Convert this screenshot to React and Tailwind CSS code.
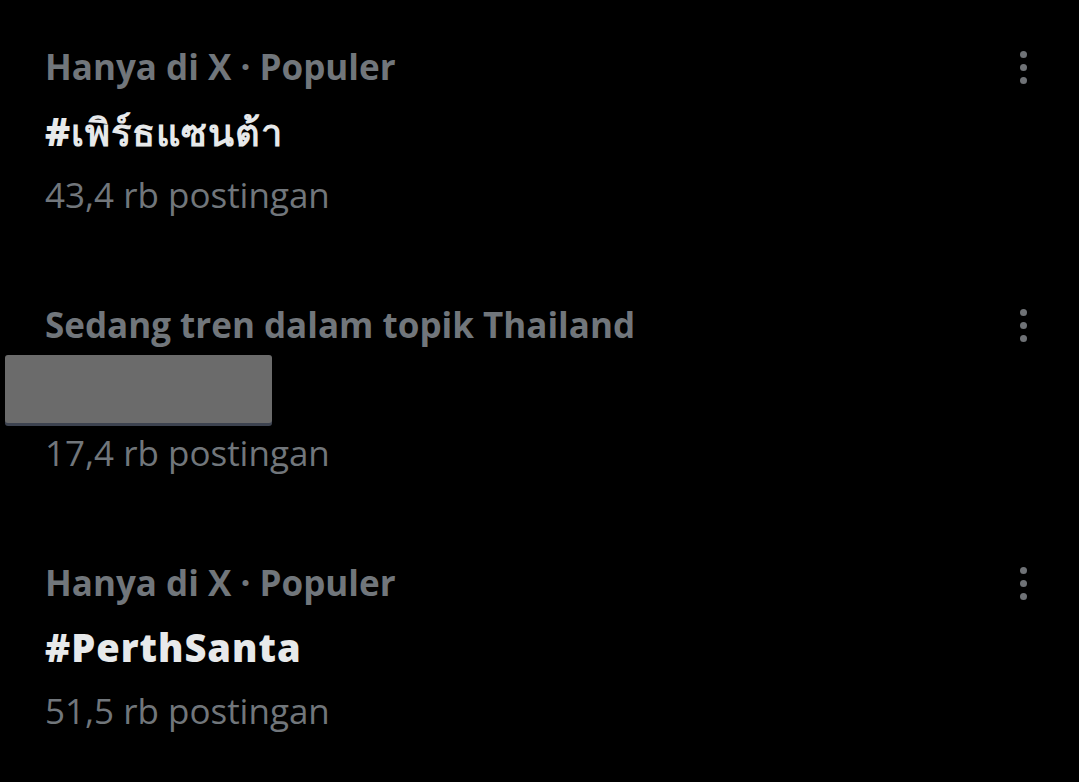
import React from "react";

const TRENDS = [
  { context: "Hanya di X · Populer", title: "#เพิร์ธแซนต้า", count: "43,4 rb postingan" },
  { context: "Sedang tren dalam topik Thailand", title: null, count: "17,4 rb postingan" },
  { context: "Hanya di X · Populer", title: "#PerthSanta", count: "51,5 rb postingan" },
];

function MoreDots() {
  return (
    <div className="flex h-[64px] w-[30px] flex-col items-center justify-center gap-[6px]">
      <span className="h-[7px] w-[7px] rounded-full bg-[#6f7276]" />
      <span className="h-[7px] w-[7px] rounded-full bg-[#6f7276]" />
      <span className="h-[7px] w-[7px] rounded-full bg-[#6f7276]" />
    </div>
  );
}

function TrendRow({ trend }) {
  return (
    <div className="mb-[66px] flex items-start justify-between">
      <div className="flex flex-col">
        <div className="h-[64px] text-[35px] font-bold leading-[64px] text-[#71767b]">
          {trend.context}
        </div>
        {trend.title ? (
          <div className="h-[64px] text-[38px] font-extrabold leading-[64px] tracking-[1px] text-[#e7e9ea]">
            {trend.title}
          </div>
        ) : (
          <div className="flex h-[64px] items-center">
            {/* redacted block */}
            <div className="-ml-[40px] h-[68px] w-[267px] rounded-[3px] bg-[#6b6b6b] shadow-[0_3px_0_#3d4350]" />
          </div>
        )}
        <div className="h-[64px] text-[35px] font-normal leading-[64px] text-[#71767b]">
          {trend.count}
        </div>
      </div>
      <MoreDots />
    </div>
  );
}

export default function App() {
  return (
    <div
      className="h-[782px] w-full overflow-hidden bg-black pl-[45px] pr-[41px] pt-[35px]"
      style={{ fontFamily: '"Open Sans", "Noto Sans", "DejaVu Sans", sans-serif' }}
    >
      {TRENDS.map((t, i) => (
        <TrendRow key={i} trend={t} />
      ))}
    </div>
  );
}
